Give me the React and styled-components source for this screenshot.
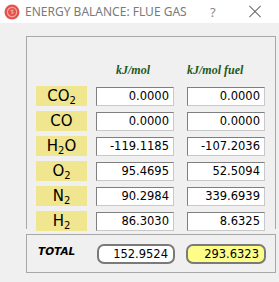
import React from 'react';
import styled, { createGlobalStyle } from 'styled-components';

const Global = createGlobalStyle`
  html, body { margin: 0; padding: 0; background: #f0f0f0; }
  #root { width: 279px; height: 282px; }
`;

const Window = styled.div`
  width: 279px;
  height: 282px;
  display: flex;
  flex-direction: column;
  background: #f0f0f0;
  overflow: hidden;
`;

const TitleBar = styled.div`
  height: 23px;
  background: #ffffff;
  display: flex;
  align-items: center;
  padding-left: 4px;
  flex-shrink: 0;
`;

const TitleText = styled.div`
  width: 185px;
  margin-left: 5px;
  font-family: "Noto Sans", "Open Sans", sans-serif;
  font-size: 12px;
  color: #7a7a7a;
  white-space: nowrap;
`;

const Help = styled.div`
  font-family: "Noto Sans", sans-serif;
  font-size: 13px;
  color: #8a8a8a;
  width: 38px;
`;

/* close cross drawn with two thin bars */
const Close = styled.div`
  position: relative;
  width: 14px;
  height: 14px;
  &::before, &::after {
    content: '';
    position: absolute;
    left: -1px;
    top: 6px;
    width: 16px;
    height: 1px;
    background: #6a6a6a;
  }
  &::before { transform: rotate(45deg); }
  &::after { transform: rotate(-45deg); }
`;

const Body = styled.div`
  padding: 13px 3px 0 26px;
  display: flex;
  flex-direction: column;
`;

const Group = styled.div`
  height: 192px;
  border: 1px solid #a8a8a8;
  border-bottom: none;
  padding-left: 9px;
  display: grid;
  grid-template-columns: 60px 91px 78px;
  grid-template-rows: 44px;
  grid-auto-rows: 20px;
  row-gap: 5px;
  align-items: center;
`;

const Head = styled.div`
  align-self: end;
  padding-bottom: 3px;
  padding-left: ${({ indent }) => indent}px;
  font-family: "Liberation Serif", serif;
  font-style: italic;
  font-weight: bold;
  font-size: 12px;
  color: #1c5a1c;
  white-space: nowrap;
`;

const Label = styled.div`
  width: 51px;
  height: 20px;
  background: #efe68f;
  display: flex;
  align-items: center;
  justify-content: center;
  font-family: "DejaVu Sans", sans-serif;
  font-size: 15px;
  color: #000;
  span { display: inline-block; line-height: 20px; }
  sub {
    font-size: 10px;
    vertical-align: -3px;
    line-height: 0;
  }
`;

const Field = styled.div`
  width: 78px;
  height: 19px;
  box-sizing: border-box;
  background: #ffffff;
  border: 1px solid;
  border-color: #7f7f7f #c8c8c8 #c8c8c8 #7f7f7f;
  display: flex;
  align-items: center;
  justify-content: flex-end;
  padding-right: 4px;
  font-family: "DejaVu Sans", sans-serif;
  font-size: 11.5px;
  color: #000;
`;

const TotalBox = styled.div`
  margin-top: 5px;
  height: 39px;
  box-sizing: border-box;
  border: 1px solid #a8a8a8;
  display: grid;
  grid-template-columns: 59px 89px 80px;
  align-items: center;
  padding-left: 11px;
`;

const TotalLabel = styled.div`
  font-family: "DejaVu Sans", sans-serif;
  font-weight: bold;
  font-style: italic;
  font-size: 10.5px;
  color: #000;
  margin-top: -5px;
`;

const TotalField = styled.div`
  width: ${({ w }) => w}px;
  height: 20px;
  box-sizing: border-box;
  border: 2px solid #7a7a7a;
  border-radius: 7px;
  background: ${({ hl }) => (hl ? '#fdfd88' : '#ffffff')};
  display: flex;
  align-items: center;
  justify-content: flex-end;
  padding-right: 5px;
  font-family: "DejaVu Sans", sans-serif;
  font-size: 11.5px;
  color: #000;
`;

const rows = [
  [<>CO<sub>2</sub></>, '0.0000', '0.0000'],
  ['CO', '0.0000', '0.0000'],
  [<>H<sub>2</sub>O</>, '-119.1185', '-107.2036'],
  [<>O<sub>2</sub></>, '95.4695', '52.5094'],
  [<>N<sub>2</sub></>, '90.2984', '339.6939'],
  [<>H<sub>2</sub></>, '86.3030', '8.6325'],
];

function AppIcon() {
  return (
    <svg width="16" height="16" viewBox="0 0 16 16">
      <circle cx="8" cy="8" r="7.5" fill="#e5514d" />
      <circle cx="8" cy="8" r="4.6" fill="none" stroke="#f6a8a4" strokeWidth="1.2" />
      <path d="M6.5 6.3h3M8 6.3v3.6M9.6 8.2l-1 1.6" stroke="#f6c0bc" strokeWidth="0.9" fill="none" />
    </svg>
  );
}

export default function App() {
  return (
    <Window>
      <Global />
      <TitleBar>
        <AppIcon />
        <TitleText>ENERGY BALANCE: FLUE GAS</TitleText>
        <Help>?</Help>
        <Close />
      </TitleBar>
      <Body>
        <Group>
          <div />
          <Head indent={20}>kJ/mol</Head>
          <Head indent={0}>kJ/mol fuel</Head>
          {rows.map(([label, a, b], i) => (
            <React.Fragment key={i}>
              <Label><span>{label}</span></Label>
              <Field>{a}</Field>
              <Field>{b}</Field>
            </React.Fragment>
          ))}
        </Group>
        <TotalBox>
          <TotalLabel>TOTAL</TotalLabel>
          <TotalField w={78}>152.9524</TotalField>
          <TotalField w={80} hl>293.6323</TotalField>
        </TotalBox>
      </Body>
    </Window>
  );
}
